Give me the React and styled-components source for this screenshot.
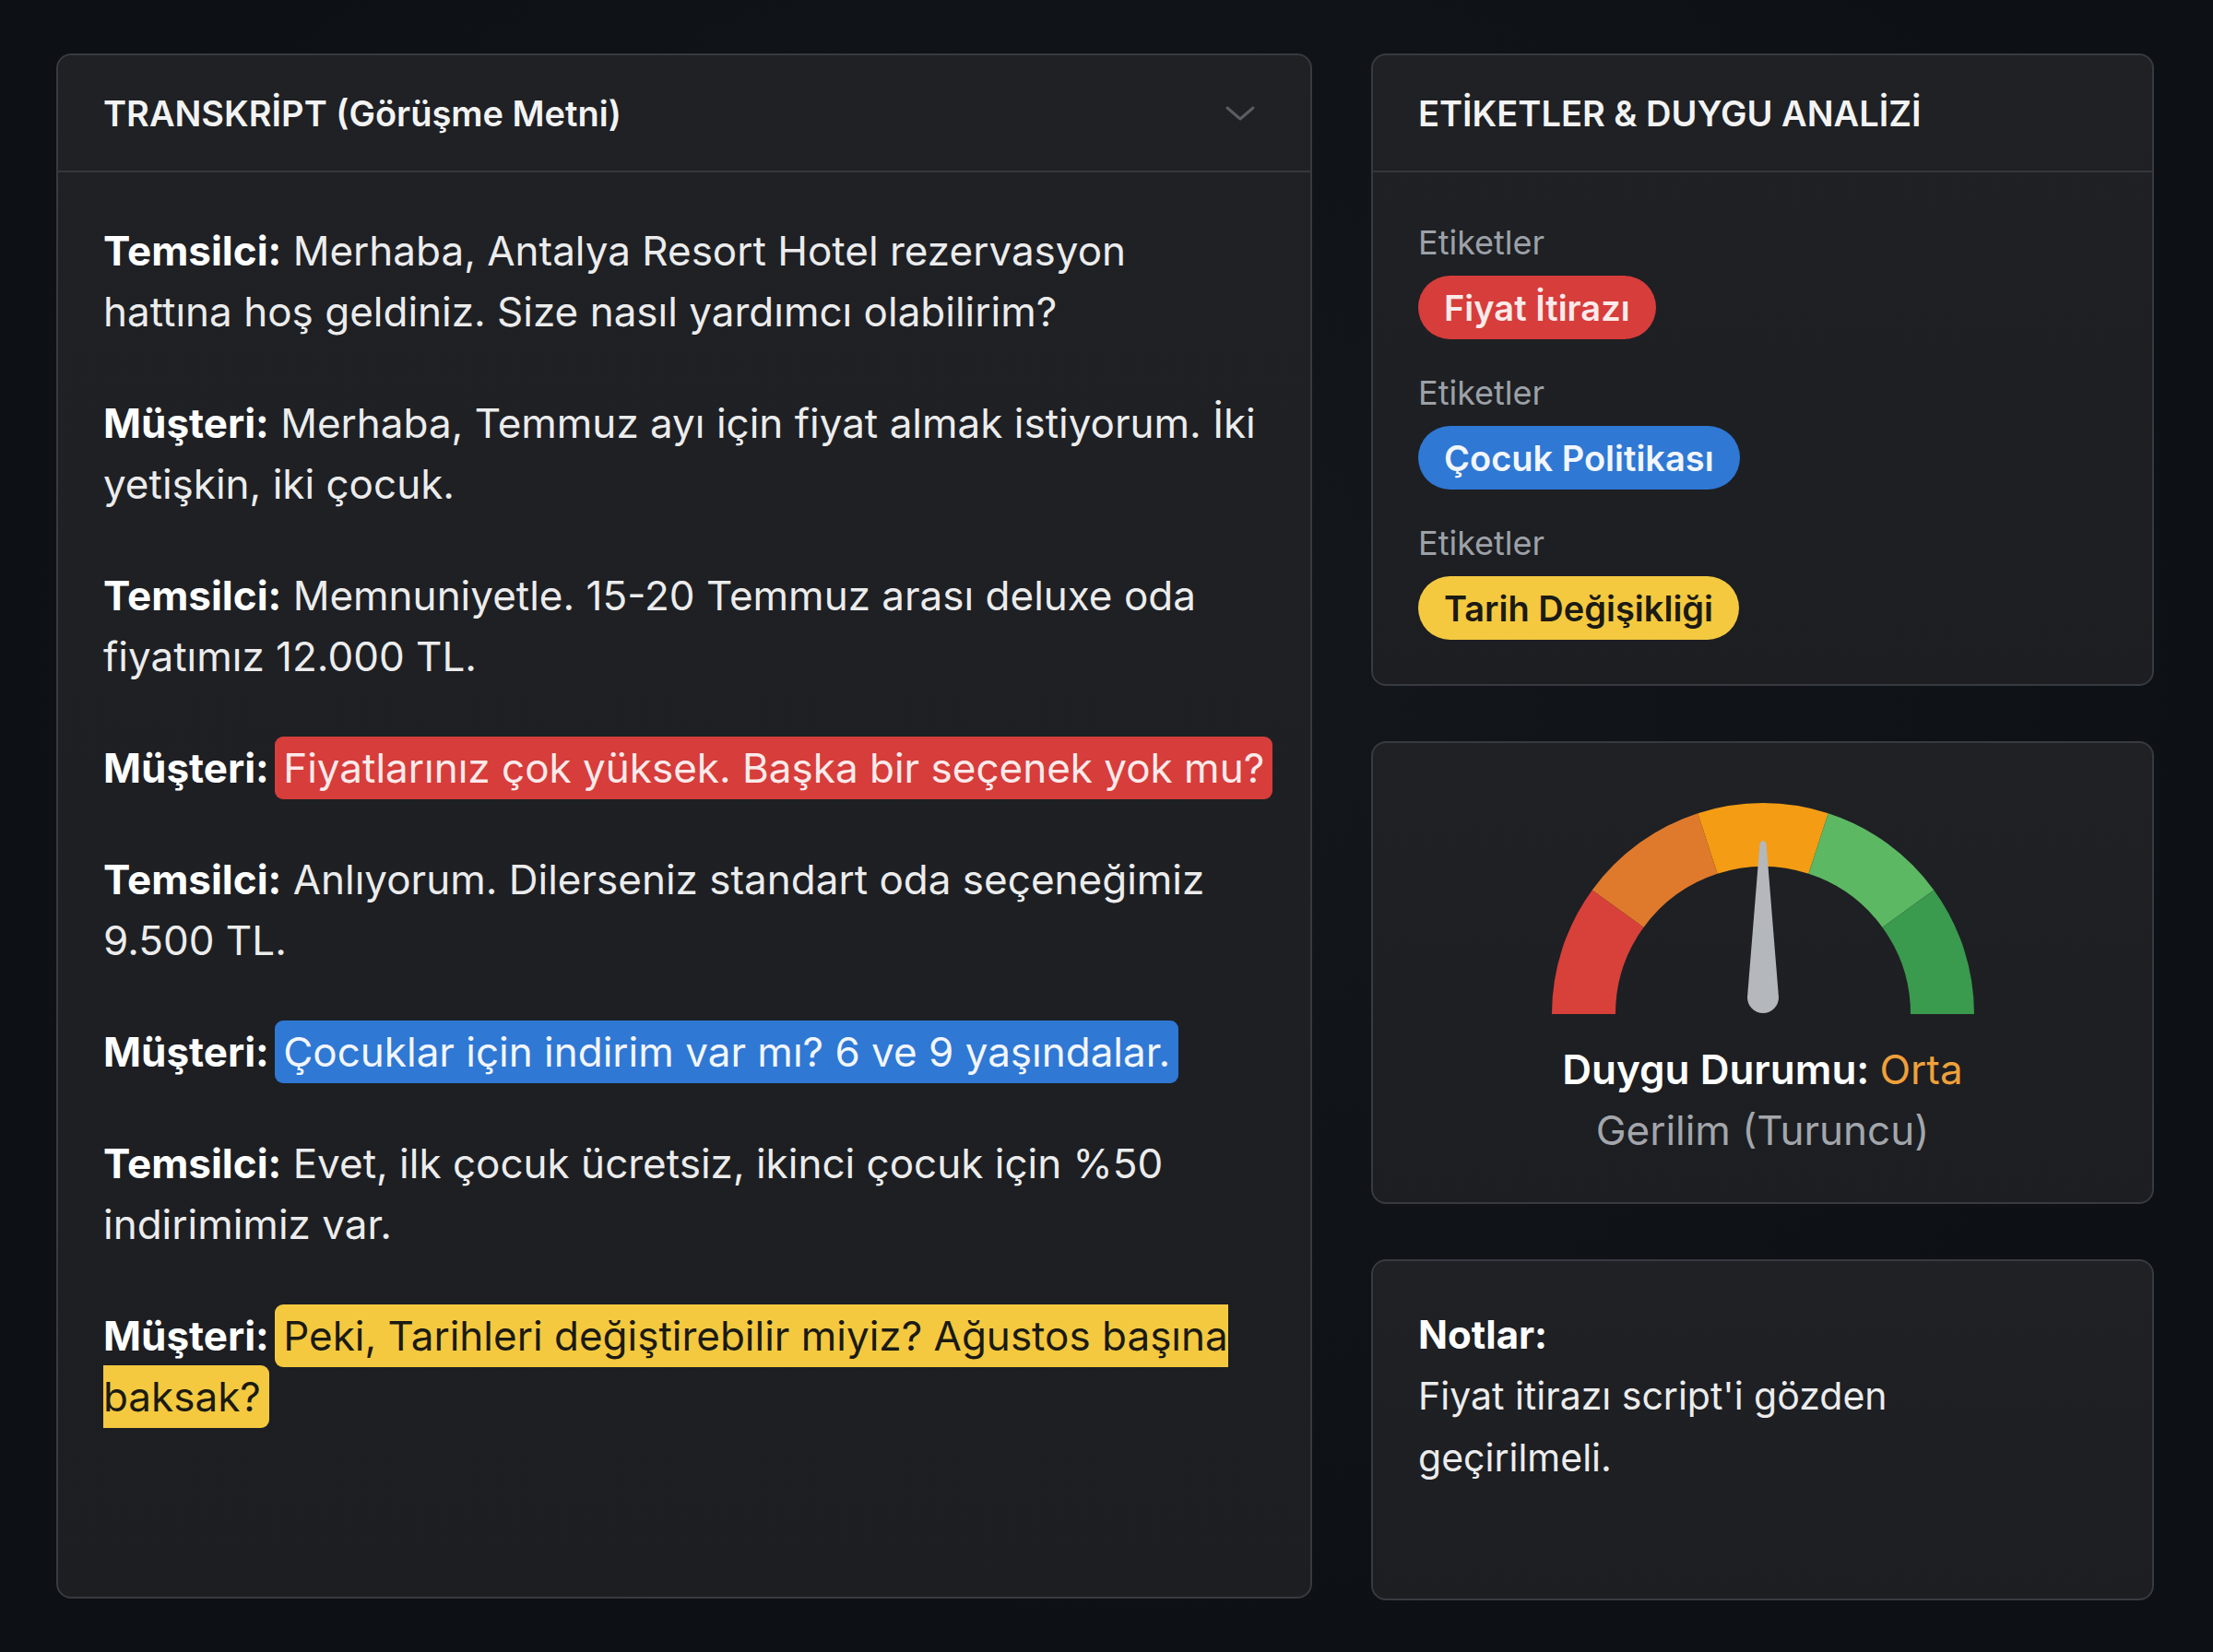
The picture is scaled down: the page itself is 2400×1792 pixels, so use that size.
import React from 'react'
import styled, { createGlobalStyle } from 'styled-components'

const GlobalStyle = createGlobalStyle`
  html, body {
    margin: 0;
    padding: 0;
    background: #0e1115;
  }
  body {
    font-family: Inter, "Noto Sans", "DejaVu Sans", sans-serif;
    color: #ececec;
  }
`

const StyledPage = styled.div`
  display: grid;
  grid-template-columns: 1362px 849px;
  column-gap: 64px;
  box-sizing: border-box;
  width: 2400px;
  height: 1792px;
  padding: 58px 63px 58px 61px;
  background: radial-gradient(ellipse at 50% 40%, #14171c 0%, #0d1014 75%);
`

const StyledPanel = styled.section`
  display: flex;
  flex-direction: column;
  box-sizing: border-box;
  height: ${props => props.$height || 'auto'};
  background: linear-gradient(180deg, #1f2125 0%, #1c1e22 100%);
  border: 2px solid #373a40;
  border-radius: 16px;
  overflow: hidden;
`

const StyledColumn = styled.div`
  display: flex;
  flex-direction: column;
  gap: 60px;
`

const StyledHeader = styled.header`
  display: flex;
  justify-content: space-between;
  align-items: center;
  box-sizing: border-box;
  height: 127px;
  padding: 0 58px 0 49px;
  border-bottom: 2px solid #34373c;
`

const StyledTitle = styled.h2`
  margin: 0;
  font-size: 38px;
  font-weight: 600;
  color: #f3f3f3;
`

const StyledTranscript = styled.div`
  padding: 52px 20px 0 49px;
`

const StyledLine = styled.p`
  margin: 0 0 55px 0;
  font-size: 44px;
  line-height: 66px;
  color: #ececec;
  white-space: nowrap;
`

const StyledSpeaker = styled.b`
  font-weight: 700;
  color: #ffffff;
`

const tones = {
  red: { bg: '#d63d3b', fg: '#fbeaea' },
  blue: { bg: '#2f78d4', fg: '#f2f6fd' },
  yellow: { bg: '#f4c93f', fg: '#1b1a14' }
}

const StyledMark = styled.span`
  margin-left: -6px;
  padding: 7px 9px;
  border-radius: 9px;
  background: ${props => tones[props.$tone].bg};
  color: ${props => tones[props.$tone].fg};
`

const StyledTags = styled.div`
  display: flex;
  flex-direction: column;
  gap: 34px;
  padding: 52px 49px 0 49px;
`

const StyledTagGroup = styled.div`
  display: flex;
  flex-direction: column;
  align-items: flex-start;
  gap: 12px;
`

const StyledTagLabel = styled.span`
  font-size: 36px;
  line-height: 48px;
  color: #9da1a7;
`

const StyledPill = styled.span`
  display: inline-flex;
  align-items: center;
  height: 69px;
  padding: 0 28px;
  border-radius: 35px;
  font-size: 38px;
  font-weight: 600;
  background: ${props => tones[props.$tone].bg};
  color: ${props => tones[props.$tone].fg};
`

const StyledGauge = styled.div`
  display: flex;
  flex-direction: column;
  align-items: center;
  padding-top: 63px;
`

const StyledGaugeText = styled.div`
  margin-top: 26px;
  text-align: center;
  font-size: 44px;
  line-height: 66px;
`

const StyledMood = styled.div`
  font-weight: 600;
  color: #ffffff;
`

const StyledMoodValue = styled.span`
  font-weight: 400;
  color: #f0a03a;
`

const StyledMoodSub = styled.div`
  color: #a3a6ab;
`

const StyledNotes = styled.div`
  padding: 46px 49px 0 49px;
  font-size: 41px;
  line-height: 67px;
  color: #ececec;
`

const StyledNotesTitle = styled.div`
  font-weight: 700;
  font-size: 42px;
  color: #ffffff;
`

function Chevron () {
  return (
    <svg width="36" height="22" viewBox="0 0 36 22" fill="none">
      <path d="M4 5 L18 17 L32 5" stroke="#595c62" strokeWidth="3" strokeLinecap="round" strokeLinejoin="round" />
    </svg>
  )
}

const segment = (cx, cy, R, r, a0, a1) => {
  const rad = a => (a * Math.PI) / 180
  const p = (rr, a) => [cx + rr * Math.cos(rad(a)), cy - rr * Math.sin(rad(a))]
  const [x0, y0] = p(R, a0)
  const [x1, y1] = p(R, a1)
  const [x2, y2] = p(r, a1)
  const [x3, y3] = p(r, a0)
  return `M${x0} ${y0} A${R} ${R} 0 0 1 ${x1} ${y1} L${x2} ${y2} A${r} ${r} 0 0 0 ${x3} ${y3} Z`
}

const gaugeColors = ['#d8403a', '#df7a2d', '#f39c14', '#5cb862', '#3a9a4d']

function Gauge () {
  const cx = 235
  const cy = 231
  return (
    <svg width="470" height="232" viewBox="0 0 470 232">
      {gaugeColors.map((c, i) => (
        <path key={c} d={segment(cx, cy, 229, 160, 180 - i * 36, 180 - (i + 1) * 36)} fill={c} />
      ))}
      <path d="M231.5 46 Q235 40 238.5 46 L252 213 A17 17 0 0 1 218 213 Z" fill="#b4b7bc" />
    </svg>
  )
}

export default function App () {
  return (
    <>
      <GlobalStyle />
      <StyledPage>
        <StyledPanel $height="1676px">
          <StyledHeader>
            <StyledTitle>TRANSKRİPT (Görüşme Metni)</StyledTitle>
            <Chevron />
          </StyledHeader>
          <StyledTranscript>
            <StyledLine>
              <StyledSpeaker>Temsilci:</StyledSpeaker> Merhaba, Antalya Resort Hotel rezervasyon<br />
              hattına hoş geldiniz. Size nasıl yardımcı olabilirim?
            </StyledLine>
            <StyledLine>
              <StyledSpeaker>Müşteri:</StyledSpeaker> Merhaba, Temmuz ayı için fiyat almak istiyorum. İki<br />
              yetişkin, iki çocuk.
            </StyledLine>
            <StyledLine>
              <StyledSpeaker>Temsilci:</StyledSpeaker> Memnuniyetle. 15-20 Temmuz arası deluxe oda<br />
              fiyatımız 12.000 TL.
            </StyledLine>
            <StyledLine>
              <StyledSpeaker>Müşteri:</StyledSpeaker> <StyledMark $tone="red">Fiyatlarınız çok yüksek. Başka bir seçenek yok mu?</StyledMark>
            </StyledLine>
            <StyledLine>
              <StyledSpeaker>Temsilci:</StyledSpeaker> Anlıyorum. Dilerseniz standart oda seçeneğimiz<br />
              9.500 TL.
            </StyledLine>
            <StyledLine>
              <StyledSpeaker>Müşteri:</StyledSpeaker> <StyledMark $tone="blue">Çocuklar için indirim var mı? 6 ve 9 yaşındalar.</StyledMark>
            </StyledLine>
            <StyledLine>
              <StyledSpeaker>Temsilci:</StyledSpeaker> Evet, ilk çocuk ücretsiz, ikinci çocuk için %50<br />
              indirimimiz var.
            </StyledLine>
            <StyledLine>
              <StyledSpeaker>Müşteri:</StyledSpeaker> <StyledMark $tone="yellow">Peki, Tarihleri değiştirebilir miyiz? Ağustos başına<br />baksak?</StyledMark>
            </StyledLine>
          </StyledTranscript>
        </StyledPanel>

        <StyledColumn>
          <StyledPanel $height="686px">
            <StyledHeader>
              <StyledTitle>ETİKETLER &amp; DUYGU ANALİZİ</StyledTitle>
            </StyledHeader>
            <StyledTags>
              <StyledTagGroup>
                <StyledTagLabel>Etiketler</StyledTagLabel>
                <StyledPill $tone="red">Fiyat İtirazı</StyledPill>
              </StyledTagGroup>
              <StyledTagGroup>
                <StyledTagLabel>Etiketler</StyledTagLabel>
                <StyledPill $tone="blue">Çocuk Politikası</StyledPill>
              </StyledTagGroup>
              <StyledTagGroup>
                <StyledTagLabel>Etiketler</StyledTagLabel>
                <StyledPill $tone="yellow">Tarih Değişikliği</StyledPill>
              </StyledTagGroup>
            </StyledTags>
          </StyledPanel>

          <StyledPanel $height="502px">
            <StyledGauge>
              <Gauge />
              <StyledGaugeText>
                <StyledMood>Duygu Durumu: <StyledMoodValue>Orta</StyledMoodValue></StyledMood>
                <StyledMoodSub>Gerilim (Turuncu)</StyledMoodSub>
              </StyledGaugeText>
            </StyledGauge>
          </StyledPanel>

          <StyledPanel $height="370px">
            <StyledNotes>
              <StyledNotesTitle>Notlar:</StyledNotesTitle>
              Fiyat itirazı script'i gözden<br />
              geçirilmeli.
            </StyledNotes>
          </StyledPanel>
        </StyledColumn>
      </StyledPage>
    </>
  )
}
